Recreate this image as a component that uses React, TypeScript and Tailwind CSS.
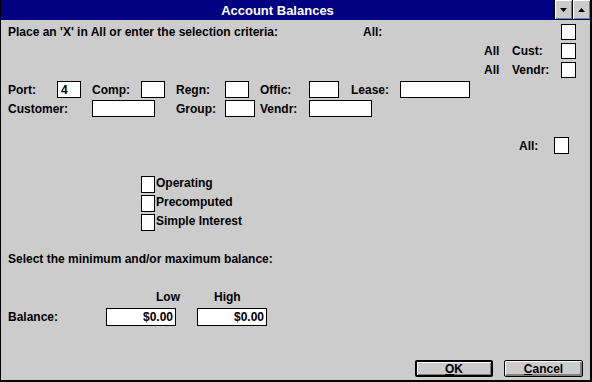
const font = { fontFamily: '"Liberation Sans", Arial, sans-serif' };

const Box = ({ w = 'w-[15px]', h = 'h-[16px]' }: { w?: string; h?: string }) => (
  <div className={`${w} ${h} shrink-0 border border-black bg-white`} />
);

const Field = ({ w, h = 'h-[17px]', value }: { w: string; h?: string; value?: string }) => (
  <div className={`${w} ${h} shrink-0 border border-black bg-white flex items-center justify-end pr-[2px] text-black`}>
    {value}
  </div>
);

const Label = ({ w, ml = '', children }: { w: string; ml?: string; children: React.ReactNode }) => (
  <span className={`${w} ${ml} shrink-0 whitespace-nowrap`}>{children}</span>
);

const TitleButton = ({ up }: { up?: boolean }) => (
  <div className="w-[18px] h-[19px] border-l border-black bg-[#cccccc] shadow-[inset_1px_1px_0_#fff,inset_-1px_-1px_0_#808080] flex items-center justify-center">
    <svg width="7" height="4" viewBox="0 0 7 4">
      {up ? <path d="M3.5 0 L7 4 L0 4 Z" fill="#000" /> : <path d="M0 0 L7 0 L3.5 4 Z" fill="#000" />}
    </svg>
  </div>
);

export default function App() {
  return (
    <div
      className="w-[592px] h-[382px] flex flex-col border-l border-r-2 border-b-2 border-black bg-[#cccccc] text-[12px] leading-[14px] font-bold text-black"
      style={font}
    >
      {/* Title bar */}
      <div className="h-[20px] flex bg-[#000080] shrink-0">
        <div className="flex-1 flex items-center justify-center text-white text-[13px] pt-[1px]">Account Balances</div>
        <TitleButton />
        <TitleButton up />
      </div>

      {/* Form */}
      <div className="flex flex-col pl-[7px]">
        <div className="mt-[4px] h-[16px] flex items-center">
          <Label w="w-[355px]">Place an 'X' in All or enter the selection criteria:</Label>
          <Label w="w-[198px]">All:</Label>
          <Box />
        </div>
        <div className="mt-[3px] h-[16px] flex items-center">
          <Label w="w-[28px]" ml="ml-[476px]">All</Label>
          <Label w="w-[49px]">Cust:</Label>
          <Box />
        </div>
        <div className="mt-[3px] h-[16px] flex items-center">
          <Label w="w-[28px]" ml="ml-[476px]">All</Label>
          <Label w="w-[49px]">Vendr:</Label>
          <Box />
        </div>

        <div className="mt-[3px] h-[17px] flex items-center">
          <Label w="w-[49px]">Port:</Label>
          <div className="w-[24px] h-[17px] shrink-0 border border-black bg-white flex items-center pl-[3px]">4</div>
          <Label w="w-[49px]" ml="ml-[11px]">Comp:</Label>
          <Field w="w-[24px]" />
          <Label w="w-[49px]" ml="ml-[11px]">Regn:</Label>
          <Field w="w-[24px]" />
          <Label w="w-[49px]" ml="ml-[11px]">Offic:</Label>
          <Field w="w-[30px]" />
          <Label w="w-[49px]" ml="ml-[12px]">Lease:</Label>
          <Field w="w-[70px]" />
        </div>
        <div className="mt-[2px] h-[17px] flex items-center">
          <Label w="w-[84px]">Customer:</Label>
          <Field w="w-[63px]" />
          <Label w="w-[49px]" ml="ml-[21px]">Group:</Label>
          <Field w="w-[30px]" />
          <Label w="w-[49px]" ml="ml-[5px]">Vendr:</Label>
          <Field w="w-[63px]" />
        </div>

        <div className="mt-[20px] h-[17px] flex items-center">
          <Label w="w-[35px]" ml="ml-[511px]">All:</Label>
          <Box h="h-[17px]" />
        </div>

        {/* Loan types */}
        <div className="mt-[22px] ml-[133px] flex flex-col gap-[2px]">
          {['Operating', 'Precomputed', 'Simple Interest'].map((t) => (
            <div key={t} className="h-[17px] flex items-start">
              <Box w="w-[14px]" h="h-[17px]" />
              <span className="ml-[1px]">{t}</span>
            </div>
          ))}
        </div>

        <div className="mt-[21px] h-[14px]">Select the minimum and/or maximum balance:</div>

        <div className="mt-[24px] h-[14px] flex">
          <Label w="w-[58px]" ml="ml-[148px]">Low</Label>
          <Label w="w-[40px]">High</Label>
        </div>
        <div className="mt-[4px] h-[18px] flex items-center">
          <Label w="w-[98px]">Balance:</Label>
          <Field w="w-[70px]" h="h-[18px]" value="$0.00" />
          <Field w="w-[70px] ml-[21px]" h="h-[18px]" value="$0.00" />
        </div>
      </div>

      {/* Buttons */}
      <div className="mt-[34px] flex justify-end gap-[11px] pr-[7px]">
        <button className="w-[78px] h-[17px] border-2 border-black rounded-[2px] bg-[#cccccc] shadow-[inset_1px_1px_0_#fff,inset_-1px_-1px_0_#808080] flex items-center justify-center leading-none">
          <span><u>O</u>K</span>
        </button>
        <button className="w-[79px] h-[17px] border border-black rounded-[2px] bg-[#cccccc] shadow-[inset_1px_1px_0_#fff,inset_-2px_-2px_0_#808080] flex items-center justify-center leading-none">
          <span><u>C</u>ancel</span>
        </button>
      </div>
    </div>
  );
}
